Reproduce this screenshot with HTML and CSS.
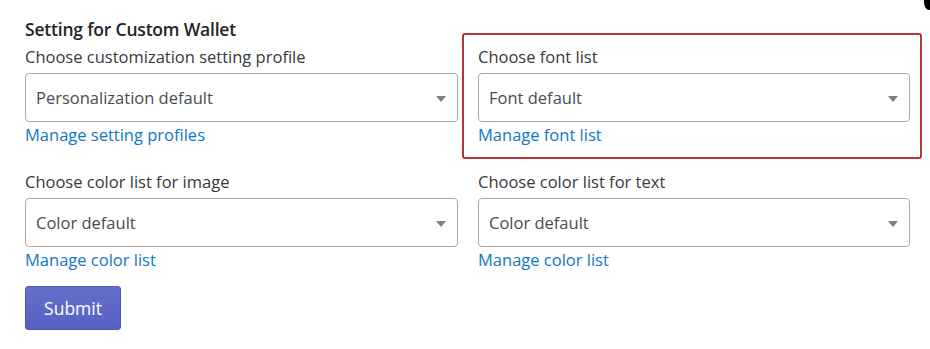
FILE: index.html
```html
<!DOCTYPE html>
<html lang="en">
<head>
  <meta charset="UTF-8" />
  <title>Setting for Custom Wallet</title>
  <link rel="stylesheet" href="styles.css">
</head>
<body>
  <span class="corner-mark"></span>
  <form class="settings">
    <h3 class="settings-title">Setting for Custom Wallet</h3>
    <div class="fields">
      <div class="field">
        <label class="field-label">Choose customization setting profile</label>
        <div class="select">Personalization default<span class="caret"></span></div>
        <a class="field-link" href="#">Manage setting profiles</a>
      </div>
      <div class="field field-marked">
        <label class="field-label">Choose font list</label>
        <div class="select">Font default<span class="caret"></span></div>
        <a class="field-link" href="#">Manage font list</a>
      </div>
      <div class="field">
        <label class="field-label">Choose color list for image</label>
        <div class="select">Color default<span class="caret"></span></div>
        <a class="field-link" href="#">Manage color list</a>
      </div>
      <div class="field">
        <label class="field-label">Choose color list for text</label>
        <div class="select">Color default<span class="caret"></span></div>
        <a class="field-link" href="#">Manage color list</a>
      </div>
    </div>
    <button class="submit" type="button">Submit</button>
  </form>
</body>
</html>
```

FILE: styles.css
```css
body {
  margin: 0;
  background-color: #fff;
  font-family: 'Open Sans', 'Noto Sans', sans-serif;
  color: #343a40;
}
.settings {
  padding: 17px 20px 0 25px;
}
.settings-title {
  margin: 0 0 4px;
  font-size: 17.5px;
  font-weight: 600;
  color: #212529;
  line-height: 24px;
  letter-spacing: -0.2px;
}
.fields {
  display: grid;
  grid-template-columns: 433px 432px;
  column-gap: 20px;
  row-gap: 22px;
}
.field {
  position: relative;
  display: flex;
  flex-direction: column;
}
.field-label {
  font-size: 16.5px;
  line-height: 23px;
  margin-bottom: 5px;
}
.select {
  position: relative;
  box-sizing: border-box;
  height: 49px;
  border: 1px solid #ababab;
  border-radius: 4px;
  padding: 0 10px;
  display: flex;
  align-items: center;
  font-size: 16.5px;
  color: #474c51;
}
.caret {
  position: absolute;
  right: 11px;
  top: 22px;
  border-left: 5px solid transparent;
  border-right: 5px solid transparent;
  border-top: 6px solid #808080;
}
.field-link {
  align-self: flex-start;
  font-size: 16.5px;
  line-height: 26px;
  color: #0f78c4;
  text-decoration: none;
}
.field-marked::after {
  content: "";
  position: absolute;
  left: -16px;
  right: -12px;
  top: -12px;
  bottom: -11px;
  border: 2px solid #b7373a;
  border-radius: 3px;
}
.submit {
  margin-top: 13px;
  width: 96px;
  height: 44px;
  border: 1px solid #4d55b8;
  border-radius: 3px;
  background: linear-gradient(#6470cc, #5761c4);
  color: #fff;
  font-family: inherit;
  font-size: 17.5px;
}
.corner-mark {
  position: absolute;
  right: -4px;
  top: -6px;
  width: 10px;
  height: 16px;
  border-radius: 50%;
  background: #000;
}
```
